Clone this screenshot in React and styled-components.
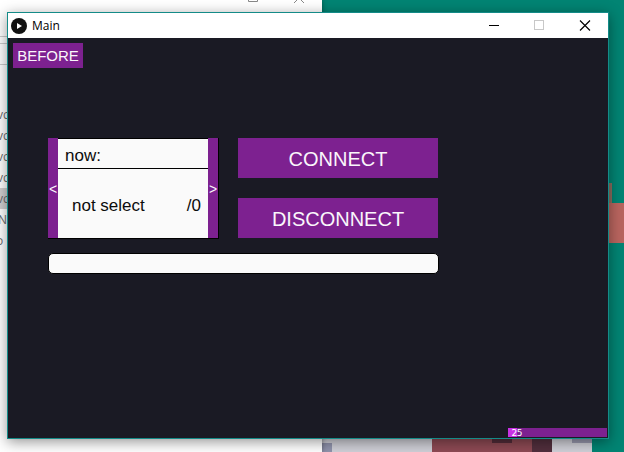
import React from "react";
import styled, { createGlobalStyle } from "styled-components";

const PURPLE = "#7d2190";

const Global = createGlobalStyle`
  * { box-sizing: border-box; }
  html, body { margin: 0; padding: 0; overflow: hidden; }
  body { font-family: "Liberation Sans", Arial, sans-serif; }
`;

const Desktop = styled.main`
  position: relative;
  width: 624px;
  height: 452px;
  overflow: hidden;
  background: #028473;
`;

const Block = styled.div`
  position: absolute;
  left: ${(p) => p.$x}px;
  top: ${(p) => p.$y}px;
  width: ${(p) => p.$w}px;
  height: ${(p) => p.$h}px;
  background: ${(p) => p.$color};
`;

const BackWindow = styled.section`
  position: absolute;
  left: 0;
  top: 0;
  width: 322px;
  height: 452px;
  background: #fff;
  box-shadow: 0 0 5px rgba(0, 0, 0, 0.4);
  overflow: hidden;
`;

const BackControls = styled.svg`
  position: absolute;
  left: 244px;
  top: 0;
`;

const BackToolbar = styled.div`
  margin-top: 36px;
  height: 29px;
  border-top: 1px solid #ccc;
  border-bottom: 1px solid #ccc;
  padding-top: 6px;
  &::before {
    content: "";
    display: block;
    border-top: 1px solid #ccc;
  }
`;

const FileList = styled.div`
  margin-top: 39px;
  font: 12px/21px "Open Sans", "Noto Sans", sans-serif;
  color: #6b6b6b;
`;

const FileItem = styled.div`
  height: 21px;
  text-indent: ${(p) => p.$indent}px;
  background: ${(p) => (p.$selected ? "#d0d0d0" : "transparent")};
`;

const Window = styled.section`
  position: absolute;
  left: 7px;
  top: 12px;
  width: 602px;
  height: 427px;
  border: 1px solid #148b88;
  background: #1a1a24;
  display: flex;
  flex-direction: column;
  box-shadow: 0 3px 13px rgba(0, 0, 0, 0.42);
`;

const TitleBar = styled.header`
  height: 25px;
  flex: none;
  display: flex;
  align-items: center;
  background: #fff;
  padding-left: 3px;
`;

const Title = styled.span`
  flex: 1;
  margin-left: 5px;
  font: 12px/16px "Open Sans", "Noto Sans", sans-serif;
  color: #000;
`;

const Canvas = styled.div`
  flex: 1;
  display: flex;
  flex-direction: column;
  align-items: flex-start;
  padding: 5px 1px 1px 5px;
`;

const Button = styled.button`
  width: ${(p) => p.$w}px;
  height: ${(p) => p.$h}px;
  padding: ${(p) => p.$drop || 0}px 0 0;
  border: 0;
  background: ${PURPLE};
  color: #faf6fb;
  font-family: inherit;
  font-size: ${(p) => p.$size}px;
  line-height: 1;
  text-align: center;
`;

const Controls = styled.div`
  display: flex;
  gap: 19px;
  margin: 70px 0 0 35px;
`;

const Selector = styled.div`
  display: flex;
  width: 171px;
  height: 101px;
  background: #000;
  padding: 0 1px 1px 0;
`;

const SelectorBody = styled.div`
  width: 150px;
  border-top: 1px solid #000;
  background: #fafafa;
  color: #0c0c0c;
  font-size: 17px;
  line-height: 20px;
`;

const SelectorHead = styled.div`
  height: 30px;
  padding: 7px 7px 0;
  border-bottom: 1px solid #000;
`;

const SelectorValue = styled.div`
  display: flex;
  justify-content: space-between;
  padding: 27px 7px 0 14px;
`;

const Actions = styled.div`
  display: flex;
  flex-direction: column;
  gap: 20px;
`;

const Field = styled.div`
  width: 391px;
  height: 21px;
  margin: 14px 0 0 35px;
  border: 1px solid #000;
  border-radius: 5px;
  background: #fafafa;
`;

const Meter = styled.div`
  width: 99px;
  height: 9px;
  margin-top: auto;
  align-self: flex-end;
  padding-left: 3.5px;
  background: linear-gradient(90deg, #c832e4 0 9px, ${PURPLE} 9px);
  color: #fff;
  font: 9px/10px "DejaVu Sans", sans-serif;
  letter-spacing: -0.5px;
`;

const files = [
  { text: "vc", indent: -3 },
  { text: "vc", indent: -3 },
  { text: "vc", indent: -3 },
  { text: "vc", indent: -3 },
  { text: "vc", indent: -3, selected: true },
  { text: "N", indent: -2 },
  { text: "o", indent: -4 },
];

const artwork = [
  [609, 183, 3, 20, "#8c6b5d"],
  [609, 203, 15, 40, "#b9655f"],
  [322, 439, 270, 13, "#d0d0d8"],
  [322, 443, 10, 9, "#9194ad"],
  [432, 439, 120, 13, "#8e4a54"],
  [492, 439, 20, 4, "#522c39"],
  [532, 439, 20, 13, "#522f3d"],
  [572, 439, 20, 4, "#9898ad"],
];

function PlayLogo() {
  return (
    <svg width="16" height="16" viewBox="0 0 16 16">
      <circle cx="8" cy="8" r="8" fill="#111" />
      <path d="M6 5l5 3-5 3z" fill="#fff" />
    </svg>
  );
}

function WindowControls() {
  return (
    <svg width="121" height="25" viewBox="0 0 121 25" fill="none">
      <path d="M2 12.5H12" stroke="#000" />
      <rect x="47.5" y="7.5" width="9" height="9" stroke="#c8c8c8" />
      <path d="M93 7.5l10 10M103 7.5l-10 10" stroke="#000" strokeWidth="1.15" />
    </svg>
  );
}

export default function App() {
  return (
    <>
      <Global />
      <Desktop>
        {artwork.map(([x, y, w, h, color]) => (
          <Block key={`${x}-${y}`} $x={x} $y={y} $w={w} $h={h} $color={color} />
        ))}
        <BackWindow>
          <BackControls width="64" height="3" fill="none" stroke="#888">
            <path d="M4.5 0v1.5h9V0M50 3l3-3M57 0l3 3" />
          </BackControls>
          <BackToolbar />
          <FileList>
            {files.map((f, i) => (
              <FileItem key={i} $indent={f.indent} $selected={f.selected}>
                {f.text}
              </FileItem>
            ))}
          </FileList>
        </BackWindow>
        <Window>
          <TitleBar>
            <PlayLogo />
            <Title>Main</Title>
            <WindowControls />
          </TitleBar>
          <Canvas>
            <Button $w={70} $h={25} $size={15}>BEFORE</Button>
            <Controls>
              <Selector>
                <Button $w={10} $h={100} $size={14} $drop={2}>&lt;</Button>
                <SelectorBody>
                  <SelectorHead>now:</SelectorHead>
                  <SelectorValue>
                    <span>not select</span>
                    <span>/0</span>
                  </SelectorValue>
                </SelectorBody>
                <Button $w={10} $h={100} $size={14} $drop={2}>&gt;</Button>
              </Selector>
              <Actions>
                <Button $w={200} $h={40} $size={20} $drop={2}>CONNECT</Button>
                <Button $w={200} $h={40} $size={20} $drop={2}>DISCONNECT</Button>
              </Actions>
            </Controls>
            <Field />
            <Meter>25</Meter>
          </Canvas>
        </Window>
      </Desktop>
    </>
  );
}
